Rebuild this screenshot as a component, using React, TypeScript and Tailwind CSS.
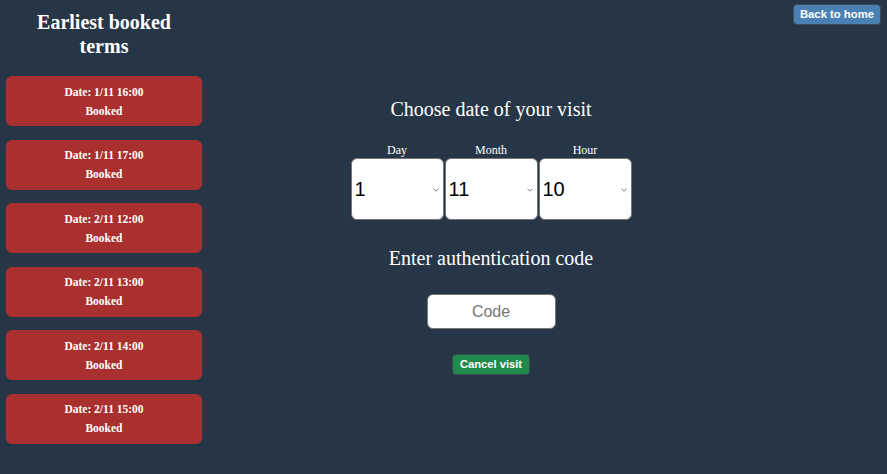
import React from "react";

const terms = [
  "1/11 16:00",
  "1/11 17:00",
  "2/11 12:00",
  "2/11 13:00",
  "2/11 14:00",
  "2/11 15:00",
];

function FakeSelect({ label, value }: { label: string; value: string }) {
  return (
    <div className="flex flex-col items-center">
      <div className="text-[12px] leading-[14px] text-white mb-[1px]">{label}</div>
      <div className="w-[93px] h-[62px] bg-white rounded-[6px] border border-[#767676] flex items-center justify-between pl-[3px] pr-[4px]">
        <span className="text-[20px] text-black font-['Liberation_Sans',Arial,sans-serif]">{value}</span>
        <svg width="6" height="4" viewBox="0 0 6 4" className="mt-[1px]">
          <path d="M0.5 0.8 L3 3.2 L5.5 0.8" fill="none" stroke="#6b6b6b" strokeWidth="0.9" />
        </svg>
      </div>
    </div>
  );
}

export default function App() {
  return (
    <div className="w-[887px] h-[474px] bg-[#263646] flex font-['Liberation_Serif','Times_New_Roman',serif] text-white overflow-hidden">
      <aside className="w-[210px] flex flex-col items-center pl-[6px] pr-[8px]">
        <h1 className="text-[20px] font-bold leading-[24px] text-center mt-[10px] w-[160px]">
          Earliest booked terms
        </h1>
        <div className="flex flex-col gap-[13.6px] mt-[18px] w-[196px]">
          {terms.map((t) => (
            <div
              key={t}
              className="h-[50px] bg-[#aa3030] rounded-[6px] flex flex-col items-center justify-center gap-[5px] text-[11.5px] font-bold leading-[14px]"
            >
              <div>Date: {t}</div>
              <div>Booked</div>
            </div>
          ))}
        </div>
      </aside>
      <main className="w-[562px] flex flex-col items-center pt-[97px]">
        <div className="text-[20px] leading-[24px]">Choose date of your visit</div>
        <div className="flex gap-[1px] mt-[22px]">
          <FakeSelect label="Day" value="1" />
          <FakeSelect label="Month" value="11" />
          <FakeSelect label="Hour" value="10" />
        </div>
        <div className="text-[20px] leading-[24px] mt-[26px]">Enter authentication code</div>
        <div className="mt-[24px] w-[129px] h-[35px] bg-white rounded-[6px] border border-[#767676] flex items-center justify-center">
          <span className="text-[16px] text-[#757575] font-['Liberation_Sans',Arial,sans-serif]">Code</span>
        </div>
        <button className="mt-[25px] h-[21px] px-[7px] bg-[#1f8a4c] rounded-[4px] border border-[#3b4b4b] text-[11.2px] font-bold text-white font-['Liberation_Sans',Arial,sans-serif] leading-none">
          Cancel visit
        </button>
      </main>
      <div className="flex-1 flex justify-end items-start pt-[4px] pr-[6px]">
        <button className="h-[21px] px-[6px] bg-[#4a81b4] rounded-[4px] border border-[#3b4b5b] text-[11.3px] font-bold text-white font-['Liberation_Sans',Arial,sans-serif] leading-none whitespace-nowrap">
          Back to home
        </button>
      </div>
    </div>
  );
}
